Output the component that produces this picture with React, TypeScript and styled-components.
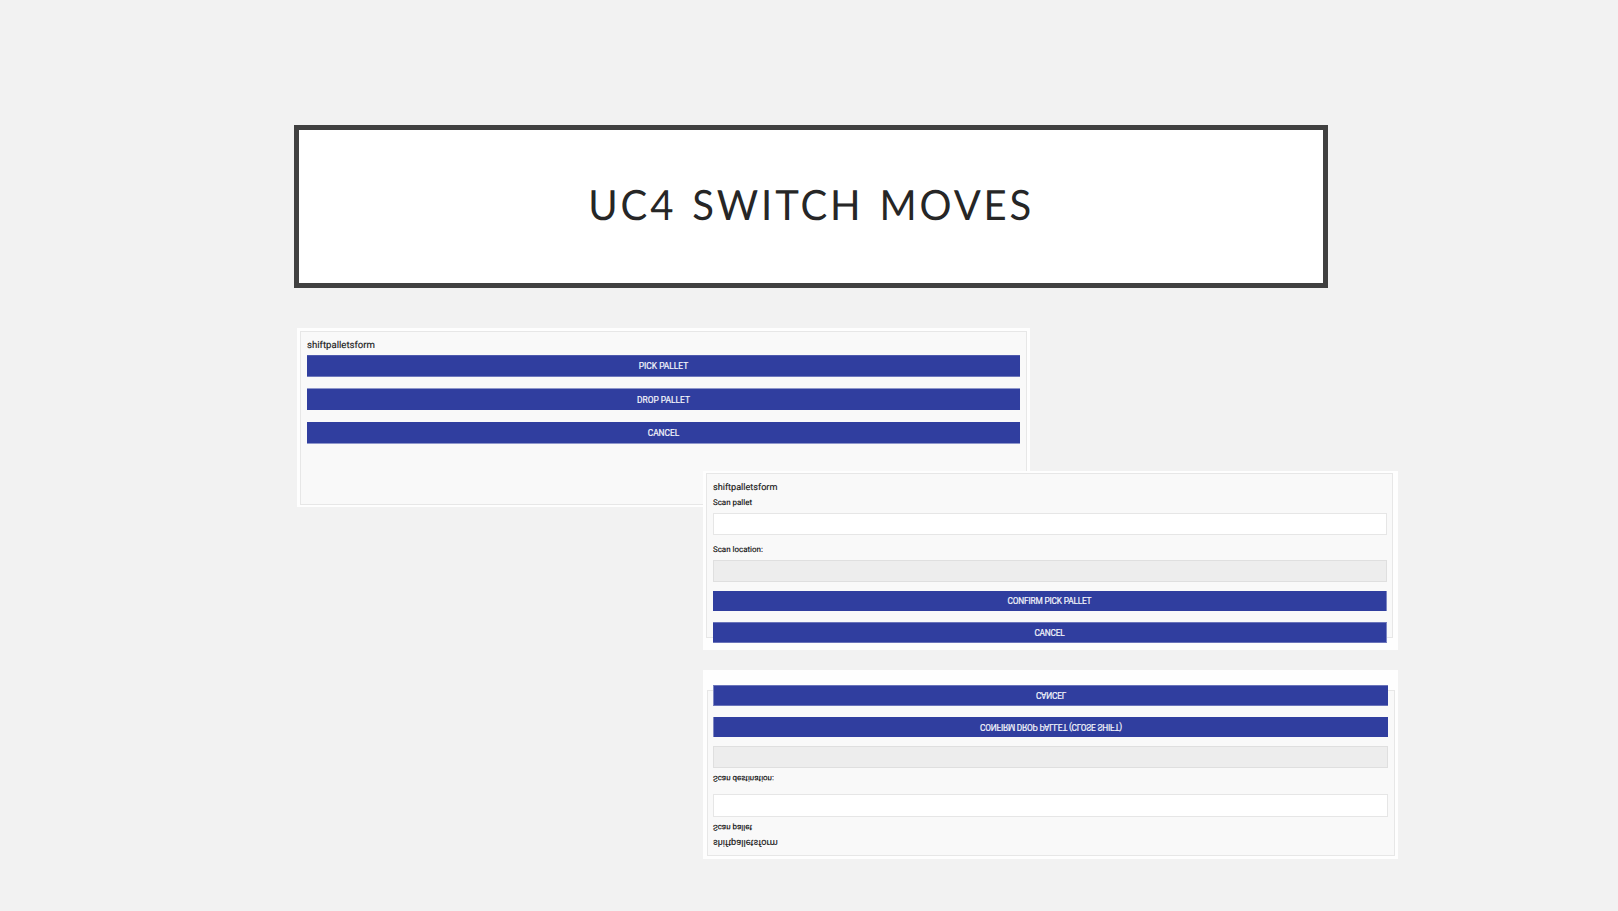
import React from "react";
import styled, { createGlobalStyle } from "styled-components";

const GlobalStyle = createGlobalStyle`
  * { box-sizing: border-box; }
  body { margin: 0; background: #f2f2f2; }
`;

const Slide = styled.main`
  width: 1618px;
  height: 911px;
  overflow: hidden;
  display: flex;
  flex-direction: column;
  align-items: flex-start;
  padding: 125px 0 0 294px;
  background: #f2f2f2;
  font-family: Roboto, sans-serif;
  text-rendering: geometricPrecision;
`;

const TitleBox = styled.header`
  width: 1034px;
  height: 163px;
  flex: none;
  display: flex;
  align-items: center;
  justify-content: center;
  border: 5px solid #404040;
  background: #fff;
`;

const Title = styled.h1`
  margin: 0;
  padding: 0 0 6px;
  font: 400 41.7px/50px Lato, sans-serif;
  letter-spacing: 3px;
  word-spacing: 3px;
  text-transform: uppercase;
  white-space: nowrap;
  color: #262626;
  transform: scaleX(0.96);
`;

const Panel = styled.section<{
  $width: number;
  $height: number;
  $margin: string;
  $padding: string;
  $flipped?: boolean;
}>`
  flex: none;
  width: ${(p) => p.$width}px;
  height: ${(p) => p.$height}px;
  margin: ${(p) => p.$margin};
  padding: ${(p) => p.$padding};
  background: #fefefe;
  transform: ${(p) => (p.$flipped ? "scaleY(-1)" : "none")};
`;

const Form = styled.form<{ $height: number; $padding: string }>`
  height: ${(p) => p.$height}px;
  padding: ${(p) => p.$padding};
  border: 1px solid #e7e7e7;
  background: #f9f9f9;
`;

const FormName = styled.h2<{ $size: number; $after: number }>`
  margin: 0 0 ${(p) => p.$after}px;
  font-weight: 400;
  font-size: ${(p) => p.$size}px;
  line-height: 12px;
  color: #1c1c1c;
  -webkit-text-stroke: 0.15px #1c1c1c;
`;

const Label = styled.label<{ $after: number }>`
  display: block;
  margin-bottom: ${(p) => p.$after}px;
  font-size: 7.95px;
  line-height: 10px;
  color: #111;
  -webkit-text-stroke: 0.15px #111;
`;

const Field = styled.input<{ $after: number; $height?: number }>`
  display: block;
  width: 100%;
  height: ${(p) => p.$height ?? 22}px;
  margin: 0 0 ${(p) => p.$after}px;
  padding: 0 4px;
  border: 1px solid #e6e6e6;
  border-radius: 0;
  background: #fff;
  &:disabled {
    border-color: #dfdfdf;
    background: #ededed;
  }
`;

const Action = styled.button<{
  $height: number;
  $after?: number;
  $size?: number;
  $top?: string;
  $bottom?: string;
  $left?: string;
  $right?: string;
}>`
  display: flex;
  align-items: center;
  justify-content: center;
  width: 100%;
  height: ${(p) => p.$height}px;
  margin: 0 0 ${(p) => p.$after ?? 0}px;
  padding: 0;
  border: 0 solid;
  border-width: ${(p) => (p.$top ? 1 : 0)}px ${(p) => (p.$right ? 1 : 0)}px
    ${(p) => (p.$bottom ? 1 : 0)}px ${(p) => (p.$left ? 1 : 0)}px;
  border-color: ${(p) => p.$top ?? "#303e9f"} ${(p) => p.$right ?? "#303e9f"}
    ${(p) => p.$bottom ?? "#303e9f"} ${(p) => p.$left ?? "#303e9f"};
  background: #303e9f;
  color: #f4f5fb;
  font: 400 ${(p) => p.$size ?? 8.3}px/10px Roboto, sans-serif;
  letter-spacing: ${(p) => (p.$size ? 0 : -0.18)}px;
  -webkit-text-stroke: 0.2px #f4f5fb;
  text-transform: uppercase;
`;

export default function App() {
  return (
    <>
      <GlobalStyle />
      <Slide>
        <TitleBox>
          <Title>UC4 Switch Moves</Title>
        </TitleBox>

        <Panel $width={733} $height={179} $margin="40px 0 0 3px" $padding="3px">
          <Form $height={174} $padding="8px 6px 0">
            <FormName $size={9.6} $after={3}>shiftpalletsform</FormName>
            <Action type="button" $height={22} $after={11} $size={8.4} $top="#4e5aad" $bottom="#6f79bc">
              Pick pallet
            </Action>
            <Action type="button" $height={22} $after={12} $size={8.4} $top="#8f97cb">
              Drop pallet
            </Action>
            <Action type="button" $height={22} $size={8.4} $bottom="#8f97cb">
              Cancel
            </Action>
          </Form>
        </Panel>

        <Panel $width={695} $height={179} $margin="-36px 0 0 409px" $padding="2px 5px 0 3px">
          <Form $height={165} $padding="8px 5px 0 6px">
            <FormName $size={9.1} $after={4}>shiftpalletsform</FormName>
            <Label $after={5}>Scan pallet</Label>
            <Field $after={10} aria-label="Scan pallet" />
            <Label $after={5}>Scan location:</Label>
            <Field $after={9} disabled aria-label="Scan location" />
            <Action type="button" $height={20} $after={11} $right="#7d86c3">
              Confirm pick pallet
            </Action>
            <Action type="button" $height={21} $top="#6a74ba" $bottom="#6a74ba" $right="#7d86c3">
              Cancel
            </Action>
          </Form>
        </Panel>

        <Panel $width={695} $height={189} $margin="20px 0 0 409px" $padding="3px 3px 0 4px" $flipped>
          <Form $height={166} $padding="7px 6px 0 5px">
            <FormName $size={9.15} $after={4}>shiftpalletsform</FormName>
            <Label $after={5}>Scan pallet</Label>
            <Field $after={11} $height={23} aria-label="Scan pallet" />
            <Label $after={5}>Scan destination:</Label>
            <Field $after={9} disabled aria-label="Scan destination" />
            <Action type="button" $height={20} $after={11} $left="#7d86c3">
              Confirm drop pallet (close shift)
            </Action>
            <Action type="button" $height={21} $top="#6a74ba" $bottom="#6a74ba" $left="#7d86c3">
              Cancel
            </Action>
          </Form>
        </Panel>
      </Slide>
    </>
  );
}
